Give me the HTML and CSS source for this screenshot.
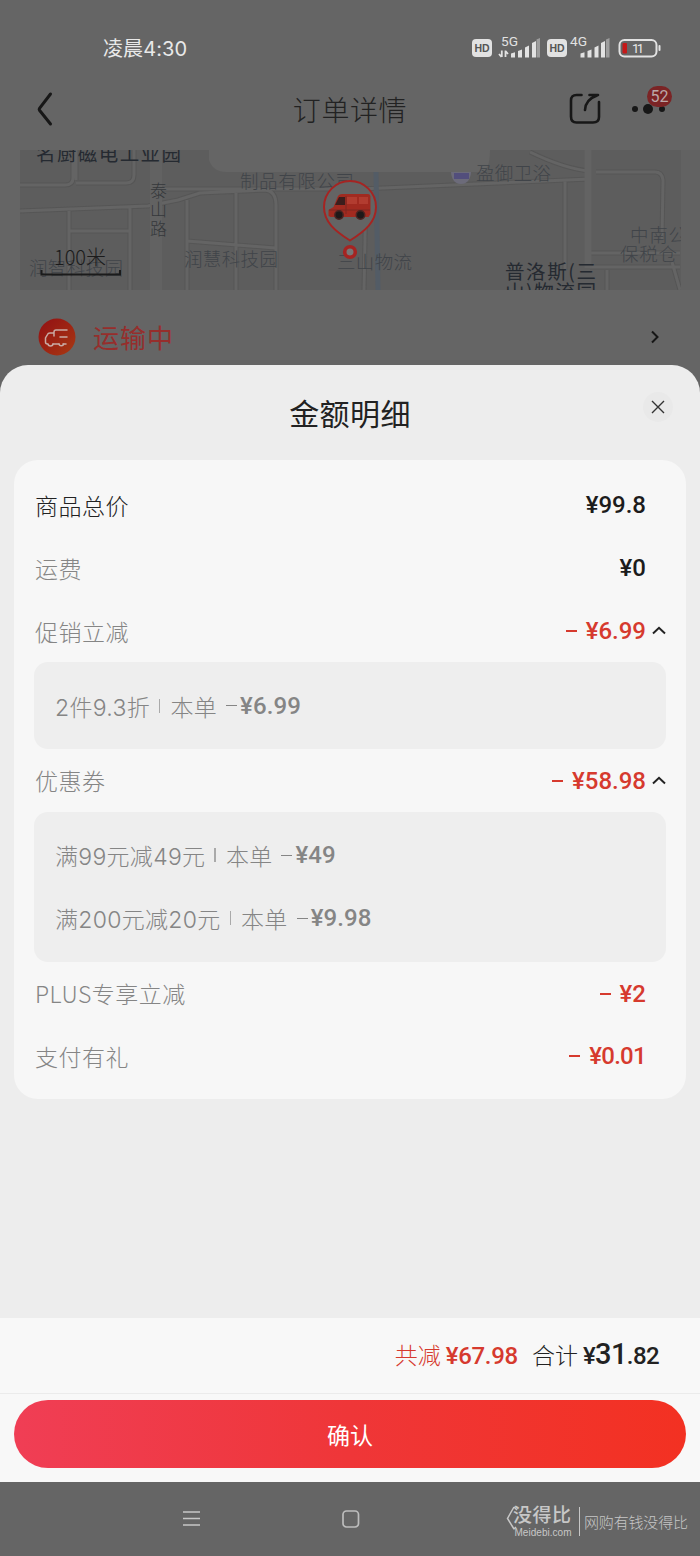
FILE: index.html
```html
<!DOCTYPE html>
<html lang="zh-CN">
<head>
<meta charset="utf-8">
<title>订单详情</title>
<link rel="stylesheet" href="styles.css">
</head>
<body>
<div class="phone">
  <header class="status">
    <span class="clock">凌晨4:30</span>
    <svg class="status-icons" width="190" height="30" viewBox="0 0 190 30">
      <g fill="#e2e2e2">
        <rect x="0" y="6" width="20" height="18" rx="4"/>
        <rect x="75" y="6" width="20" height="18" rx="4"/>
        <path d="M39 20.500l4-1.300V24.500h-4zM46 18l4-1.500v8h-4zM53 14.500l4-2v12h-4zM60 10l4-2v16.500h-4z"/>
        <path d="M108.500 20.500l4-1.300V24.500h-4zM115.500 18l4-1.500v8h-4zM122.500 14.500l4-2v12h-4zM129 10l4-2v16.500h-4z"/>
        <path opacity=".45" d="M64.500 6.500l3.500-1.500v19.500h-3.500zM134 6.500l3.500-1.500v19.500h-3.500z"/>
      </g>
      <path d="M29.800 17.500v6.500M29.500 24l-2.500-3M33.500 24v-6.500M33.500 18l2.500 3" fill="none" stroke="#e2e2e2" stroke-width="1.800"/>
      <g class="hd"><text x="2.500" y="18.700" textLength="15">HD</text><text x="77.500" y="18.700" textLength="15">HD</text></g>
      <g class="net"><text x="29" y="13" textLength="17" lengthAdjust="spacingAndGlyphs">5G</text><text x="98" y="13" textLength="17" lengthAdjust="spacingAndGlyphs">4G</text></g>
      <rect x="147.500" y="7" width="37" height="16.500" rx="5" fill="none" stroke="#e2e2e2" stroke-width="2"/>
      <rect x="150.500" y="10" width="4.500" height="10.500" rx="1" fill="#c51818"/>
      <rect x="186.500" y="12" width="2" height="6" rx="1" fill="#e2e2e2"/>
      <text class="level" x="160" y="20" textLength="12">11</text>
    </svg>
  </header>
  <nav class="navbar">
    <svg class="back" width="20" height="36" viewBox="0 0 20 36"><path d="M15.500 3L4.500 17.300q-.7 1 0 2L15.500 33" fill="none" stroke="#171717" stroke-width="3" stroke-linecap="round"/></svg>
    <h1 class="nav-title">订单详情</h1>
    <svg class="share" width="34" height="34" viewBox="0 0 34 34"><path d="M13.500 3H8.500Q3 3 3 8.500V24.500Q3 30.500 8.500 30.500H25Q31 30.500 31 25V10M21.500 3H30M29 3.500Q17.500 7.500 17 18" fill="none" stroke="#171717" stroke-width="2.600" stroke-linecap="round" stroke-linejoin="round"/></svg>
    <div class="more"><i class="dot"></i><i class="dot big"></i><i class="dot"></i><span class="badge">52</span></div>
  </nav>
  <svg class="map" width="700" height="140" viewBox="0 150 700 140">
    <rect x="20" y="150" width="662" height="140" fill="#5d5d5d"/>
    <g fill="none" stroke="#565656" stroke-width="5" stroke-linejoin="round">
      <path d="M20 185H65Q73 185 73 178V150M76 150V180M76 183H126Q134 183 134 175V150M20 211L148 206 178 200 200 193 265 190Q276 191 276 205V290M69 211V290M130 207V290M69 231H131M187 200V290M236 191V290M187 241L275 248M160 189H360L590 179M565 180V270M590 171Q565 169 530 152M596 172H655Q662 172 663 180L662 240M590 253H680M590 267H680M607 270V290M672 262L680 290M366 188L364 290"/>
    </g>
    <g fill="none" stroke="#646464" stroke-width="3" stroke-linejoin="round">
      <path d="M20 185H65Q73 185 73 178V150M76 150V180M76 183H126Q134 183 134 175V150M20 211L148 206 178 200 200 193 265 190Q276 191 276 205V290M69 211V290M130 207V290M69 231H131M187 200V290M236 191V290M187 241L275 248M160 189H360L590 179M565 180V270M590 171Q565 169 530 152M596 172H655Q662 172 663 180L662 240M590 253H680M590 267H680M607 270V290M672 262L680 290M366 188L364 290"/>
      <path d="M156 150V290" stroke="#626262" stroke-width="12"/>
      <path d="M588 150V268" stroke="#636363" stroke-width="7"/>
      <path d="M376 172L378 290" stroke="#535c66" stroke-width="5"/>
    </g>
    <path d="M209 150V160Q213 172 226 172H480Q490 172 490 150Z" fill="#656565"/>
    <path d="M451 172h20q-1 12-10 12t-10-12z" fill="#6c6b7a"/><rect x="454" y="173" width="15" height="6" fill="#524e7c"/>
    <g class="place">
      <text x="240" y="188" textLength="114">制品有限公司</text>
      <text x="476" y="180" textLength="75">盈御卫浴</text>
      <text x="184" y="266" textLength="94">润慧科技园</text>
      <text x="29" y="275" textLength="94">润智科技园</text>
      <text x="337" y="269" textLength="75">三山物流</text>
      <text x="630" y="242" textLength="57">中南公</text>
      <text x="620" y="261" textLength="57">保税仓</text><text x="676" y="261">·</text>
    </g>
    <g class="road"><text x="150" y="197">泰</text><text x="150" y="216">山</text><text x="150" y="235">路</text></g>
    <g class="district">
      <text x="36" y="161" textLength="145">名厨磁电工业园</text>
      <text x="505" y="279" textLength="91">普洛斯(三</text>
      <text x="505" y="299" textLength="91">山)物流园</text>
    </g>
    <rect x="681" y="150" width="19" height="140" fill="#626262"/>
    <text class="scale" x="54" y="265" textLength="52">100米</text>
    <path d="M41.500 270v4.500H120V270" fill="none" stroke="#1b1b1b" stroke-width="2"/>
    <path d="M350 240.500C335 231 324 222 324 207A26 26 0 0 1 376 207C376 222 365 231 350 240.500Z" fill="#646464" stroke="#a52422" stroke-width="2"/>
    <path d="M328.500 216v-6l5-3 4-10q1-3 5-3h25q3 0 3 3v17l-2 3h-38z" fill="#a12a20"/>
    <path d="M335 205l4-8h6v8z" fill="#3c1d1c"/>
    <path d="M347 197h10v7h-10zM359 197h9v7h-9z" fill="#b23c30"/>
    <path d="M329 210h41M346 196v18" stroke="#7d2720" stroke-width="1"/>
    <g fill="#1e1919" stroke="#4c2422" stroke-width="1.500"><circle cx="339" cy="215" r="4.200"/><circle cx="360.500" cy="215" r="4.200"/></g>
    <circle cx="350" cy="252" r="5.300" fill="#777" stroke="#a52422" stroke-width="3.600"/>
  </svg>
  <section class="shipping">
    <svg width="38" height="38" viewBox="0 0 38 38"><defs><linearGradient id="g" x2="1" y2="1"><stop stop-color="#920f13"/><stop offset="1" stop-color="#a83913"/></linearGradient></defs><circle cx="19" cy="19" r="18.500" fill="url(#g)"/><path d="M29 12H18q-2 0-2 2v4M16 15h-4q-2 0-2.500 1.500L7.500 20v4q0 2 2 2M15 26h6M25 26h3M22 19h7" fill="none" stroke="#c9aaa4" stroke-width="1.500" stroke-linecap="round"/><path d="M10 25.500a2.300 2.300 0 1 0 5 0M21 25.500a2.300 2.300 0 1 0 4.600 0" fill="none" stroke="#c9aaa4" stroke-width="1.500"/></svg>
    <span class="shipping-text">运输中</span>
    <svg class="chev" width="10" height="14" viewBox="0 0 10 14"><path d="M2 1.500L7.500 7 2 12.500" fill="none" stroke="#161616" stroke-width="2"/></svg>
  </section>

  <main class="sheet">
    <div class="sheet-head">
      <h2 class="sheet-title">金额明细</h2>
      <span class="close"><svg width="14" height="14" viewBox="0 0 14 14"><path d="M1 1L13 13M13 1L1 13" stroke="#333" stroke-width="1.400"/></svg></span>
    </div>
    <div class="card">
      <div class="row dark"><span>商品总价</span><b class="price">¥99.8</b></div>
      <div class="row"><span>运费</span><b class="price">¥0</b></div>
      <div class="row"><span>促销立减</span><b class="price off"><i class="minus"></i>¥6.99</b><svg class="fold" width="14" height="9" viewBox="0 0 14 9"><path d="M1 7.500L7 1.800l6 5.700" fill="none" stroke="#222" stroke-width="2"/></svg></div>
      <div class="group">
        <div class="item">2件9.3折<i class="bar"></i>本单<i class="dash"></i><b>¥6.99</b></div>
      </div>
      <div class="row"><span>优惠券</span><b class="price off"><i class="minus"></i>¥58.98</b><svg class="fold" width="14" height="9" viewBox="0 0 14 9"><path d="M1 7.500L7 1.800l6 5.700" fill="none" stroke="#222" stroke-width="2"/></svg></div>
      <div class="group">
        <div class="item">满99元减49元<i class="bar"></i>本单<i class="dash"></i><b>¥49</b></div>
        <div class="item">满200元减20元<i class="bar"></i>本单<i class="dash"></i><b>¥9.98</b></div>
      </div>
      <div class="row"><span>PLUS专享立减</span><b class="price off"><i class="minus"></i>¥2</b></div>
      <div class="row"><span>支付有礼</span><b class="price off last"><i class="minus"></i>¥0.01</b></div>
    </div>
    <div class="total">
      <span class="saved">共减</span><b class="saved-sum">¥67.98</b>
      <span class="sum-label">合计</span><b class="sum">¥<span class="sum-int">31</span>.82</b>
    </div>
    <div class="action"><button class="confirm">确认</button></div>
  </main>
  <footer class="system">
    <svg class="menu" width="18" height="18" viewBox="0 0 18 18"><path d="M0 2h17M0 8.500h17M0 15h17" stroke="#c6c6c6" stroke-width="1.700"/></svg>
    <svg class="home" width="18" height="18" viewBox="0 0 18 18"><rect x="1" y="1" width="15.500" height="16" rx="3.500" fill="none" stroke="#bdbdbd" stroke-width="1.700"/></svg>
    <svg class="mark" width="190" height="44" viewBox="0 0 190 44">
      <path d="M9 6L2.500 17.500 9 28M9 6l3 3M9 28l2-2" fill="none" stroke="#c7c7c7" stroke-width="1.500"/>
      <text class="brand" x="8" y="20.500" textLength="58">没得比</text>
      <text class="site" x="9.500" y="35" textLength="57">Meidebi.com</text>
      <path d="M74.500 6v29" stroke="#c7c7c7"/>
      <text class="slogan" x="79" y="27" textLength="104">网购有钱没得比</text>
    </svg>
  </footer>
</div>
</body>
</html>
```

FILE: styles.css
```css
* { box-sizing: border-box; }
body { margin: 0; font-family: "Noto Sans CJK SC", sans-serif; }
i { font-style: normal; }
.phone { display: flex; flex-direction: column; width: 700px; height: 1556px; overflow: hidden; background: #656565; }

.status { display: flex; align-items: center; justify-content: space-between; height: 70px; padding: 27px 38px 0 103px; }
.clock { color: #e9e9e9; font-family: Inter, "Noto Sans CJK SC", sans-serif; font-size: 20px; line-height: 42px; letter-spacing: .1px; }
.status-icons { margin-bottom: 1px; }
.hd { fill: #555; font: 700 10.5px "Liberation Sans", sans-serif; }
.net { fill: #e2e2e2; font: 12px Roboto, sans-serif; }
.level { fill: #e9e9e9; font: 13px Roboto, sans-serif; }

.navbar { display: grid; grid-template-columns: 256px 188px 158px 1fr; align-items: center; height: 80px; padding: 0 6px 0 0; }
.back { margin-left: 35px; margin-top: -3px; }
.nav-title { margin: -2px 0 0; font-size: 28px; font-weight: 300; line-height: 40px; letter-spacing: .6px; text-align: center; color: #222; }
.share { margin: -3px 0 0 auto; }
.more { position: relative; display: flex; align-items: center; gap: 6px; margin-left: 30px; margin-top: -3px; }
.dot { width: 6px; height: 6px; border-radius: 50%; background: #171717; }
.dot.big { width: 10px; height: 10px; margin: 0 -1px; }
.dot.big + .dot { margin-left: 1px; }
.badge { position: absolute; left: 15px; bottom: 7px; width: 25px; height: 21px; border-radius: 11px; background: #7b2425; color: #bba7a7; font: 16px/21px Roboto, sans-serif; text-align: center; }

.map { display: block; flex: none; }
.place { fill: #404449; font-size: 18.5px; font-weight: 300; }
.road { fill: #35383b; font-size: 17px; font-weight: 300; }
.district { fill: #252a31; font-size: 19.5px; font-weight: 400; }
.scale { fill: #1b1b1b; font-size: 20px; font-weight: 300; }

.shipping { display: flex; align-items: center; height: 75px; margin: 0 19px; padding: 19px 21px 0 19px; flex: none; }
.shipping-text { margin-left: 17px; color: #962e2c; font-size: 26px; letter-spacing: 1px; line-height: 40px; }
.chev { margin-left: auto; }

.sheet { display: flex; flex-direction: column; flex: none; height: 1117px; border-radius: 28px 28px 0 0; background: #ededed; }
.sheet-head { display: grid; grid-template-columns: 1fr auto 1fr; height: 95px; padding: 27px 27px 0; }
.sheet-title { grid-column: 2; margin: -2px 0 0; font-size: 30px; line-height: 44px; font-weight: 400; letter-spacing: .4px; color: #222; }
.close { display: grid; place-items: center; justify-self: end; width: 30px; height: 30px; border-radius: 50%; background: #e9e9e9; }
.card { margin: 0 14px; height: 639px; padding: 14px 20px 0; border-radius: 24px; background: #f7f7f7; }
.row { display: flex; align-items: center; position: relative; height: 62.700px; padding-right: 20px; color: #858585; font-size: 23px; font-weight: 300; letter-spacing: .5px; }
.row > span { margin-left: 1px; line-height: 34px; }
.dark { color: #222; }
.price { margin-left: auto; color: #1c1c1c; font: 500 24px/30px Roboto, sans-serif; letter-spacing: 0; display: flex; align-items: center; }
.off { padding-top: 1px; color: #d63a2e; }
.last { letter-spacing: -.7px; }
.minus { width: 11px; height: 2px; margin-right: 9px; background: #d63a2e; }
.fold { position: absolute; right: 0; top: 27px; }
.group { padding: 12px 21px; border-radius: 14px; background: #eee; }
.item { display: flex; align-items: center; height: 63px; color: #858585; font-family: Inter, "Noto Sans CJK SC", sans-serif; font-size: 23px; font-weight: 300; letter-spacing: .3px; }
.item b { font: 500 24px/30px Roboto, sans-serif; letter-spacing: .1px; }
.bar { width: 1.500px; height: 14px; margin: 0 10px 0 9px; background: #aaa; }
.dash { width: 11px; height: 1.500px; margin: 0 3px 0 9px; background: #858585; }

.total { display: flex; align-items: baseline; height: 75px; margin-top: auto; padding: 19px 41px 0 0; justify-content: flex-end; background: #f8f8f8; font-size: 23px; font-weight: 300; color: #222; }
.saved, .saved-sum { color: #d63a2e; }
.saved-sum, .sum { margin-left: 5px; font: 500 24px/30px Roboto, sans-serif; letter-spacing: -.3px; }
.sum { letter-spacing: -.6px; }
.sum-label { margin-left: 14px; }
.sum-int { font-size: 29px; }
.action { height: 89px; padding: 6px 14px 14px; border-top: 1px solid #ebebeb; background: #f8f8f8; }
.confirm { display: block; width: 100%; height: 68px; padding: 0; border: 0; border-radius: 34px; background: linear-gradient(90deg, #f03e55, #ef3638 50%, #f33122); color: #fff; font: 23px/68px "Noto Sans CJK SC", sans-serif; }

.system { display: flex; align-items: center; height: 74px; flex: none; }
.menu { margin-left: 183px; }
.home { margin-left: 141px; }
.mark { margin-left: 145px; margin-top: 8px; }
.mark text { fill: #c7c7c7; }
.brand { font-size: 19px; font-weight: 500; }
.site { font: 10px "Liberation Sans", sans-serif; }
.slogan { font-size: 15px; font-weight: 300; }
```
